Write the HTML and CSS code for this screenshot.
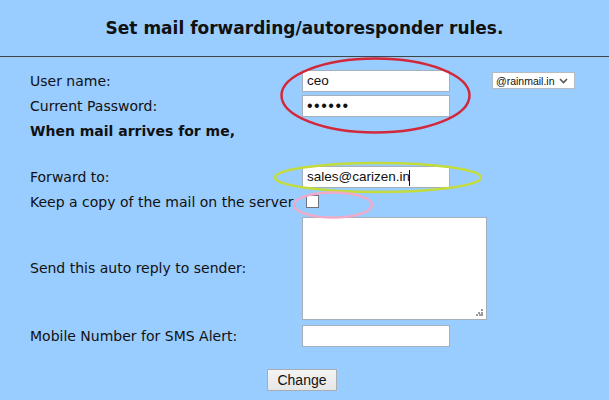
FILE: index.html
```html
<!DOCTYPE html>
<html>
<head>
<meta charset="utf-8">
<link rel="stylesheet" href="styles.css">
</head>
<body>
<div class="page">
  <h1 class="title">Set mail forwarding/autoresponder rules.</h1>
  <div class="rule"></div>
  <form class="form">
    <div class="label r1">User name:</div>
    <div class="field r1"><input class="text" type="text" value="ceo"></div>
    <div class="extra r1">
      <div class="select"><span>@rainmail.in</span>
        <svg width="9" height="6" viewBox="0 0 9 6"><path d="M1 1 L4.5 4.5 L8 1" fill="none" stroke="#555" stroke-width="1.6"/></svg>
      </div>
    </div>

    <div class="label r2">Current Password:</div>
    <div class="field r2"><input class="text pw" type="password" value="secret"></div>

    <div class="label bold r3">When mail arrives for me,</div>
    <div class="blank"></div>

    <div class="label r5">Forward to:</div>
    <div class="field r5"><input class="text fwd" type="text" value="sales@carizen.in"><span class="caret"></span></div>

    <div class="label r6">Keep a copy of the mail on the server.</div>
    <div class="field r6"><span class="check"></span></div>

    <div class="label r7">Send this auto reply to sender:</div>
    <div class="field r7"><div class="area"><svg class="grip" width="7" height="7" viewBox="0 0 7 7"><g fill="#9a9a9a"><rect x="5" y="0" width="2" height="2"/><rect x="2" y="3" width="2" height="2"/><rect x="5" y="3" width="2" height="2"/><rect x="0" y="5" width="2" height="2"/><rect x="3" y="5" width="2" height="2"/><rect x="5" y="5" width="2" height="2"/></g></svg></div></div>

    <div class="label r8">Mobile Number for SMS Alert:</div>
    <div class="field r8"><input class="text" type="text" value=""></div>
  </form>
  <div class="actions"><button class="btn" type="button">Change</button></div>

  <svg class="marks" width="609" height="400" viewBox="0 0 609 400">
    <ellipse cx="375.5" cy="95.5" rx="94" ry="37" fill="none" stroke="#d3283c" stroke-width="2.5"/>
    <ellipse cx="378" cy="177.5" rx="103" ry="14.5" fill="none" stroke="#c3dc3c" stroke-width="2.5"/>
    <ellipse cx="333" cy="205" rx="39" ry="12.5" fill="none" stroke="#f0aac8" stroke-width="2.5"/>
  </svg>
</div>
</body>
</html>
```
FILE: styles.css
```css
html, body {
  margin: 0;
  padding: 0;
  background: #99ccff;
}
.page {
  position: relative;
  width: 609px;
  height: 400px;
  overflow: hidden;
  font-family: "DejaVu Sans", sans-serif;
  color: #111;
}
.title {
  margin: 0;
  height: 56px;
  display: flex;
  align-items: center;
  justify-content: center;
  font-size: 17px;
  font-weight: bold;
}
.rule {
  border-top: 1px solid #3a4656;
  border-bottom: 1px solid #a9c4df;
}
.form {
  display: grid;
  grid-template-columns: 272px 190px 1fr;
  grid-template-rows: 25px 25px 25px 21px 25px 25px 108px 27px;
  padding: 10px 0 0 30px;
  align-items: center;
}
.label {
  grid-column: 1;
  font-size: 14px;
  white-space: nowrap;
}
.bold { font-weight: bold; }
.r1 { grid-row: 1; }
.r2 { grid-row: 2; }
.r3 { grid-row: 3; }
.r5 { grid-row: 5; }
.r6 { grid-row: 6; }
.r7 { grid-row: 7; }
.r8 { grid-row: 8; }
.blank { grid-row: 4; grid-column: 1; }
.field {
  grid-column: 2;
  position: relative;
  display: flex;
  align-items: center;
}
.extra { grid-column: 3; }
.text {
  box-sizing: border-box;
  width: 148px;
  height: 22px;
  margin: 0;
  padding: 1px 4px;
  border: 1px solid #a6b0ba;
  background: #fff;
  font-family: "Liberation Sans", Arial, sans-serif;
  font-size: 13.5px;
  color: #111;
  outline: none;
}
.pw { letter-spacing: 1.5px; font-size: 16px; }
.caret {
  position: absolute;
  left: 107px;
  top: 4px;
  width: 1px;
  height: 16px;
  background: #111;
}
.check {
  box-sizing: border-box;
  width: 13px;
  height: 13px;
  margin-left: 4px;
  border: 1px solid #6d7580;
  background: #fff;
}
.area {
  position: relative;
  box-sizing: border-box;
  width: 185px;
  height: 103px;
  border: 1px solid #a6b0ba;
  background: #fff;
}
.grip {
  position: absolute;
  right: 3px;
  bottom: 3px;
}
.select {
  box-sizing: border-box;
  width: 83px;
  height: 17px;
  border: 1px solid #b4bcc4;
  background: #fff;
  display: flex;
  align-items: center;
  justify-content: space-between;
  padding: 0 6px 0 3px;
  font-family: "Liberation Sans", Arial, sans-serif;
  font-size: 10.5px;
  color: #111;
}
.actions {
  display: flex;
  justify-content: center;
  padding-top: 20px;
  padding-right: 5px;
}
.btn {
  box-sizing: border-box;
  width: 70px;
  height: 22px;
  margin: 0;
  padding: 0;
  border: 1px solid #a8aeb4;
  background: linear-gradient(#f4f4f4, #e6e6e6);
  font-family: "Liberation Sans", Arial, sans-serif;
  font-size: 14px;
  color: #111;
}
.marks {
  position: absolute;
  left: 0;
  top: 0;
  pointer-events: none;
}
```
